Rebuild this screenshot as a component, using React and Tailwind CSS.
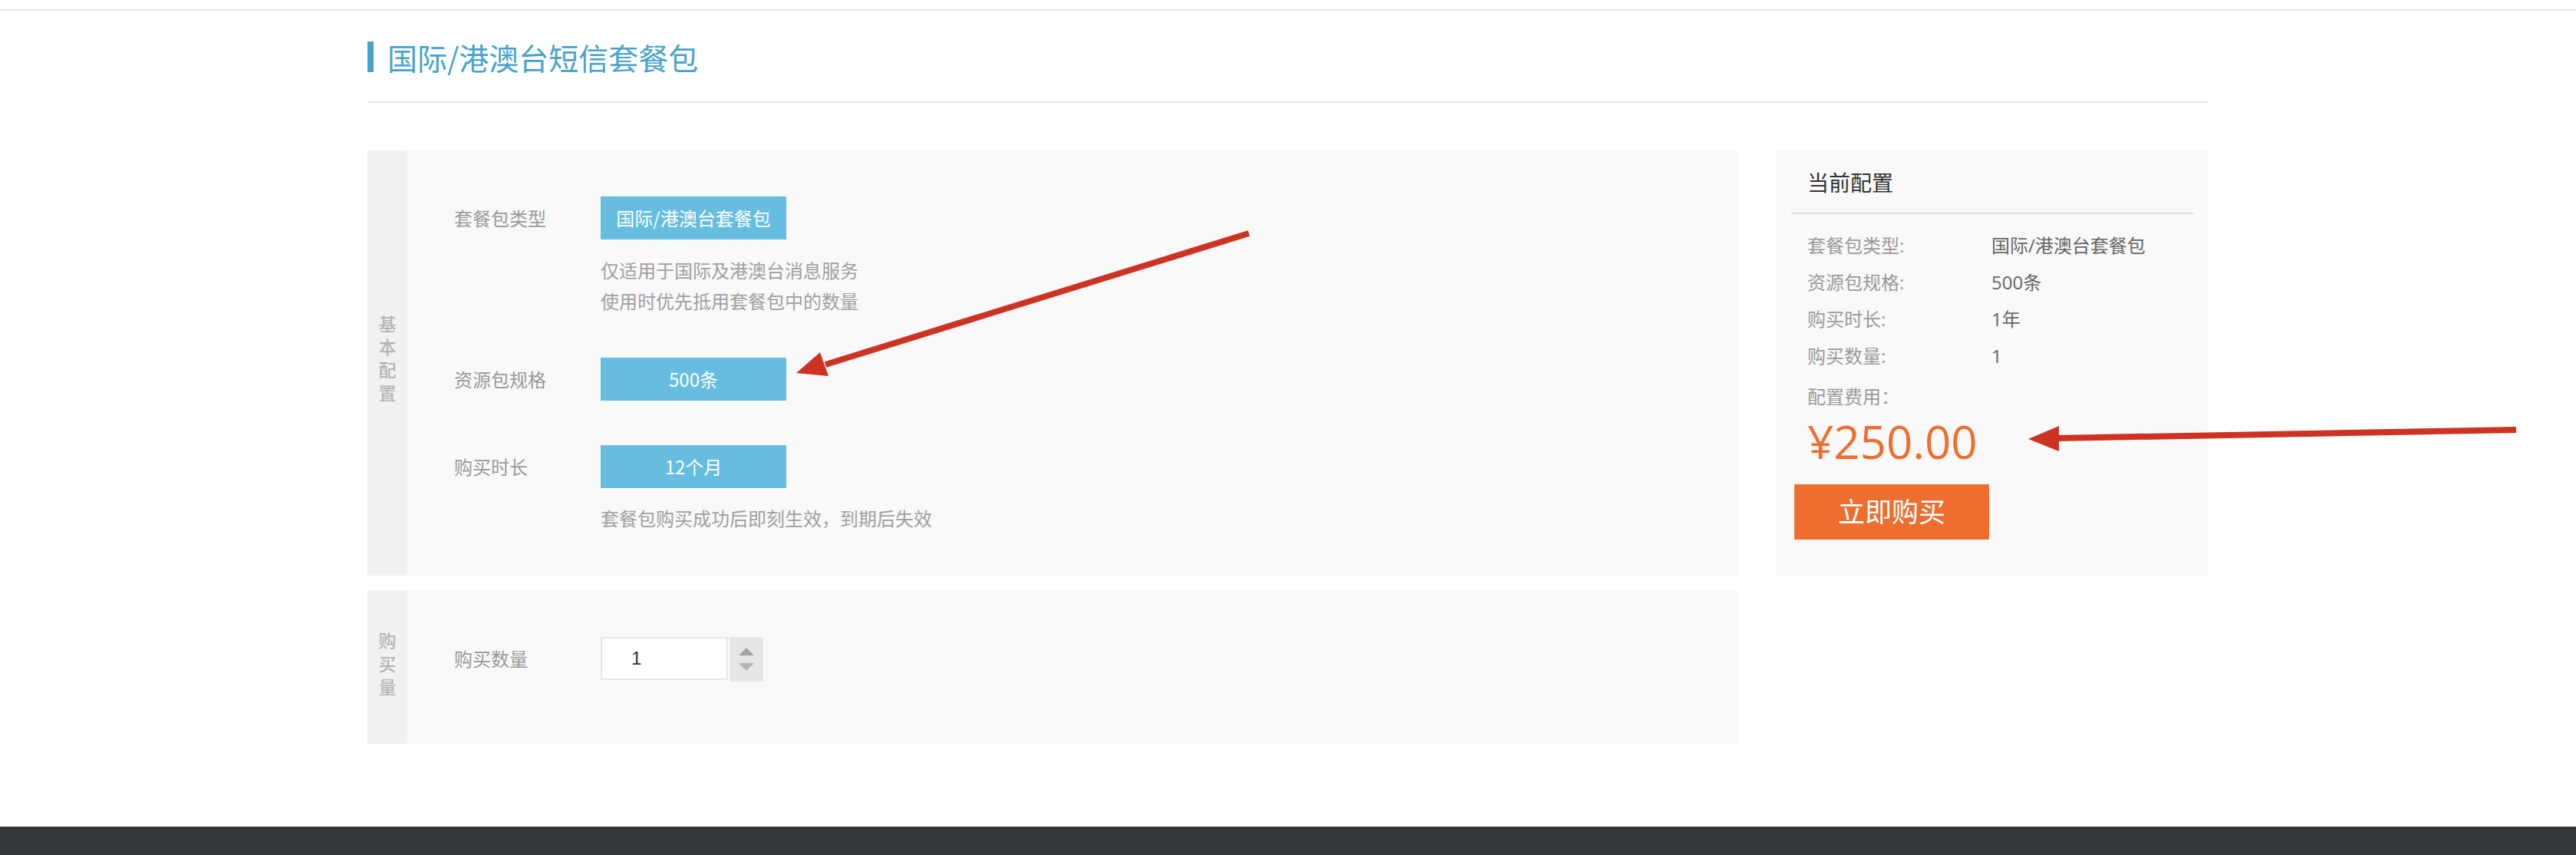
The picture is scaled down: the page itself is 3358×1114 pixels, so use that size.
import React from 'react';

const cjk = "font-['Noto_Sans_CJK_SC',sans-serif]";

const SideLabel = ({ chars, offset }) => (
  <div className={`w-[52px] shrink-0 bg-[#f1f1f1] flex flex-col items-center justify-center ${offset}`}>
    {chars.map((c) => (
      <span key={c} className="block text-[23px] leading-[30px] font-medium text-[#b4b4b4]">{c}</span>
    ))}
  </div>
);

const OptionRow = ({ label, value }) => (
  <div className="flex items-center">
    <div className="w-[191px] text-[24px] text-[#9a9a9a]">{label}</div>
    <div className="w-[242px] h-[56px] bg-[#66bde0] text-white text-[24px] flex items-center justify-center">{value}</div>
  </div>
);

const summary = [
  ['套餐包类型:', '国际/港澳台套餐包'],
  ['资源包规格:', '500条'],
  ['购买时长:', '1年'],
  ['购买数量:', '1'],
];

const Arrows = () => (
  <svg className="absolute left-0 top-0 pointer-events-none" width="3358" height="1114" viewBox="0 0 3358 1114">
    {/* arrow pointing at the size option */}
    <line x1="1628" y1="304" x2="1076" y2="475" stroke="#cc3322" strokeWidth="8" />
    <polygon points="1038,486 1069,459 1080,490" fill="#cc3322" />
    {/* arrow pointing at the price */}
    <line x1="3280" y1="560" x2="2680" y2="571" stroke="#cc3322" strokeWidth="8" />
    <polygon points="2644,572 2684,555 2684,588" fill="#cc3322" />
  </svg>
);

export default function App() {
  return (
    <div className={`relative min-h-[1114px] bg-white ${cjk}`}>
      <div className="h-[14px] border-b-2 border-[#e8e8e8]" />

      <div className="w-[2400px] mx-auto">
        <div className="pt-[40px] pb-[38px] border-b-2 border-[#e6e6e6]">
          <div className="flex items-center">
            <div className="w-[8px] h-[40px] bg-[#46a3cb]" />
            <h1 className="ml-[18px] text-[39px] leading-[40px] text-[#46a3cb] font-normal">国际/港澳台短信套餐包</h1>
          </div>
        </div>

        <div className="mt-[62px] flex gap-[48px]">
          <div className="w-[1788px] flex flex-col gap-[19px]">
            <div className="h-[554px] bg-[#f9f9f9] flex">
              <SideLabel chars={['基', '本', '配', '置']} offset="pb-[14px]" />
              <div className="pt-[60px] pl-[61px]">
                <OptionRow label="套餐包类型" value="国际/港澳台套餐包" />
                <div className="ml-[191px] mt-[20px] text-[24px] leading-[40px] text-[#a0a0a0]">
                  <p>仅适用于国际及港澳台消息服务</p>
                  <p>使用时优先抵用套餐包中的数量</p>
                </div>
                <div className="mt-[54px]">
                  <OptionRow label="资源包规格" value="500条" />
                </div>
                <div className="mt-[58px]">
                  <OptionRow label="购买时长" value="12个月" />
                </div>
                <p className="ml-[191px] mt-[19px] text-[24px] leading-[40px] text-[#a0a0a0]">套餐包购买成功后即刻生效，到期后失效</p>
              </div>
            </div>

            <div className="h-[200px] bg-[#f9f9f9] flex">
              <SideLabel chars={['购', '买', '量']} offset="pb-[10px]" />
              <div className="pt-[61px] pl-[61px]">
                <div className="flex items-start">
                  <div className="w-[191px] h-[56px] flex items-center text-[24px] text-[#9a9a9a]">购买数量</div>
                  <div className="w-[166px] h-[56px] bg-white border-2 border-[#e6e6e6] flex items-center pl-[38px] text-[24px] text-[#333] font-['Liberation_Sans',sans-serif]">1</div>
                  <div className="ml-[2px] w-[44px] h-[58px] bg-[#e6e6e6] flex flex-col items-center justify-center gap-[10px]">
                    <svg width="20" height="10" viewBox="0 0 20 10"><polygon points="10,0 20,10 0,10" fill="#a3a3a3" /></svg>
                    <svg width="20" height="10" viewBox="0 0 20 10"><polygon points="0,0 20,0 10,10" fill="#b3b3b3" /></svg>
                  </div>
                </div>
              </div>
            </div>
          </div>

          <div className="w-[564px] h-[554px] bg-[#f9f9f9] px-[20px] font-['Open_Sans','Noto_Sans_CJK_SC',sans-serif]">
            <div className="h-[83px] border-b-2 border-[#dddddd] flex items-center pl-[21px] pt-[2px] text-[28px] text-[#333]">当前配置</div>
            <div className="mt-[17px] pl-[21px]">
              {summary.map(([k, v]) => (
                <div key={k} className="flex text-[24px] leading-[48px]">
                  <span className="w-[240px] text-[#9a9a9a]">{k}</span>
                  <span className="text-[#666]">{v}</span>
                </div>
              ))}
              <div className="mt-[5px] text-[24px] leading-[48px] text-[#9a9a9a]">配置费用：</div>
              <div className="mt-[4px] text-[60px] leading-[60px] text-[#ef6e2f]">¥250.00</div>
            </div>
            <button className="mt-[26px] ml-[4px] w-[254px] h-[72px] bg-[#ef6e2f] text-white text-[35px] flex items-center justify-center">立即购买</button>
          </div>
        </div>
      </div>

      <footer className="mt-[108px] h-[120px] bg-[#33373b]" />

      <Arrows />
    </div>
  );
}
